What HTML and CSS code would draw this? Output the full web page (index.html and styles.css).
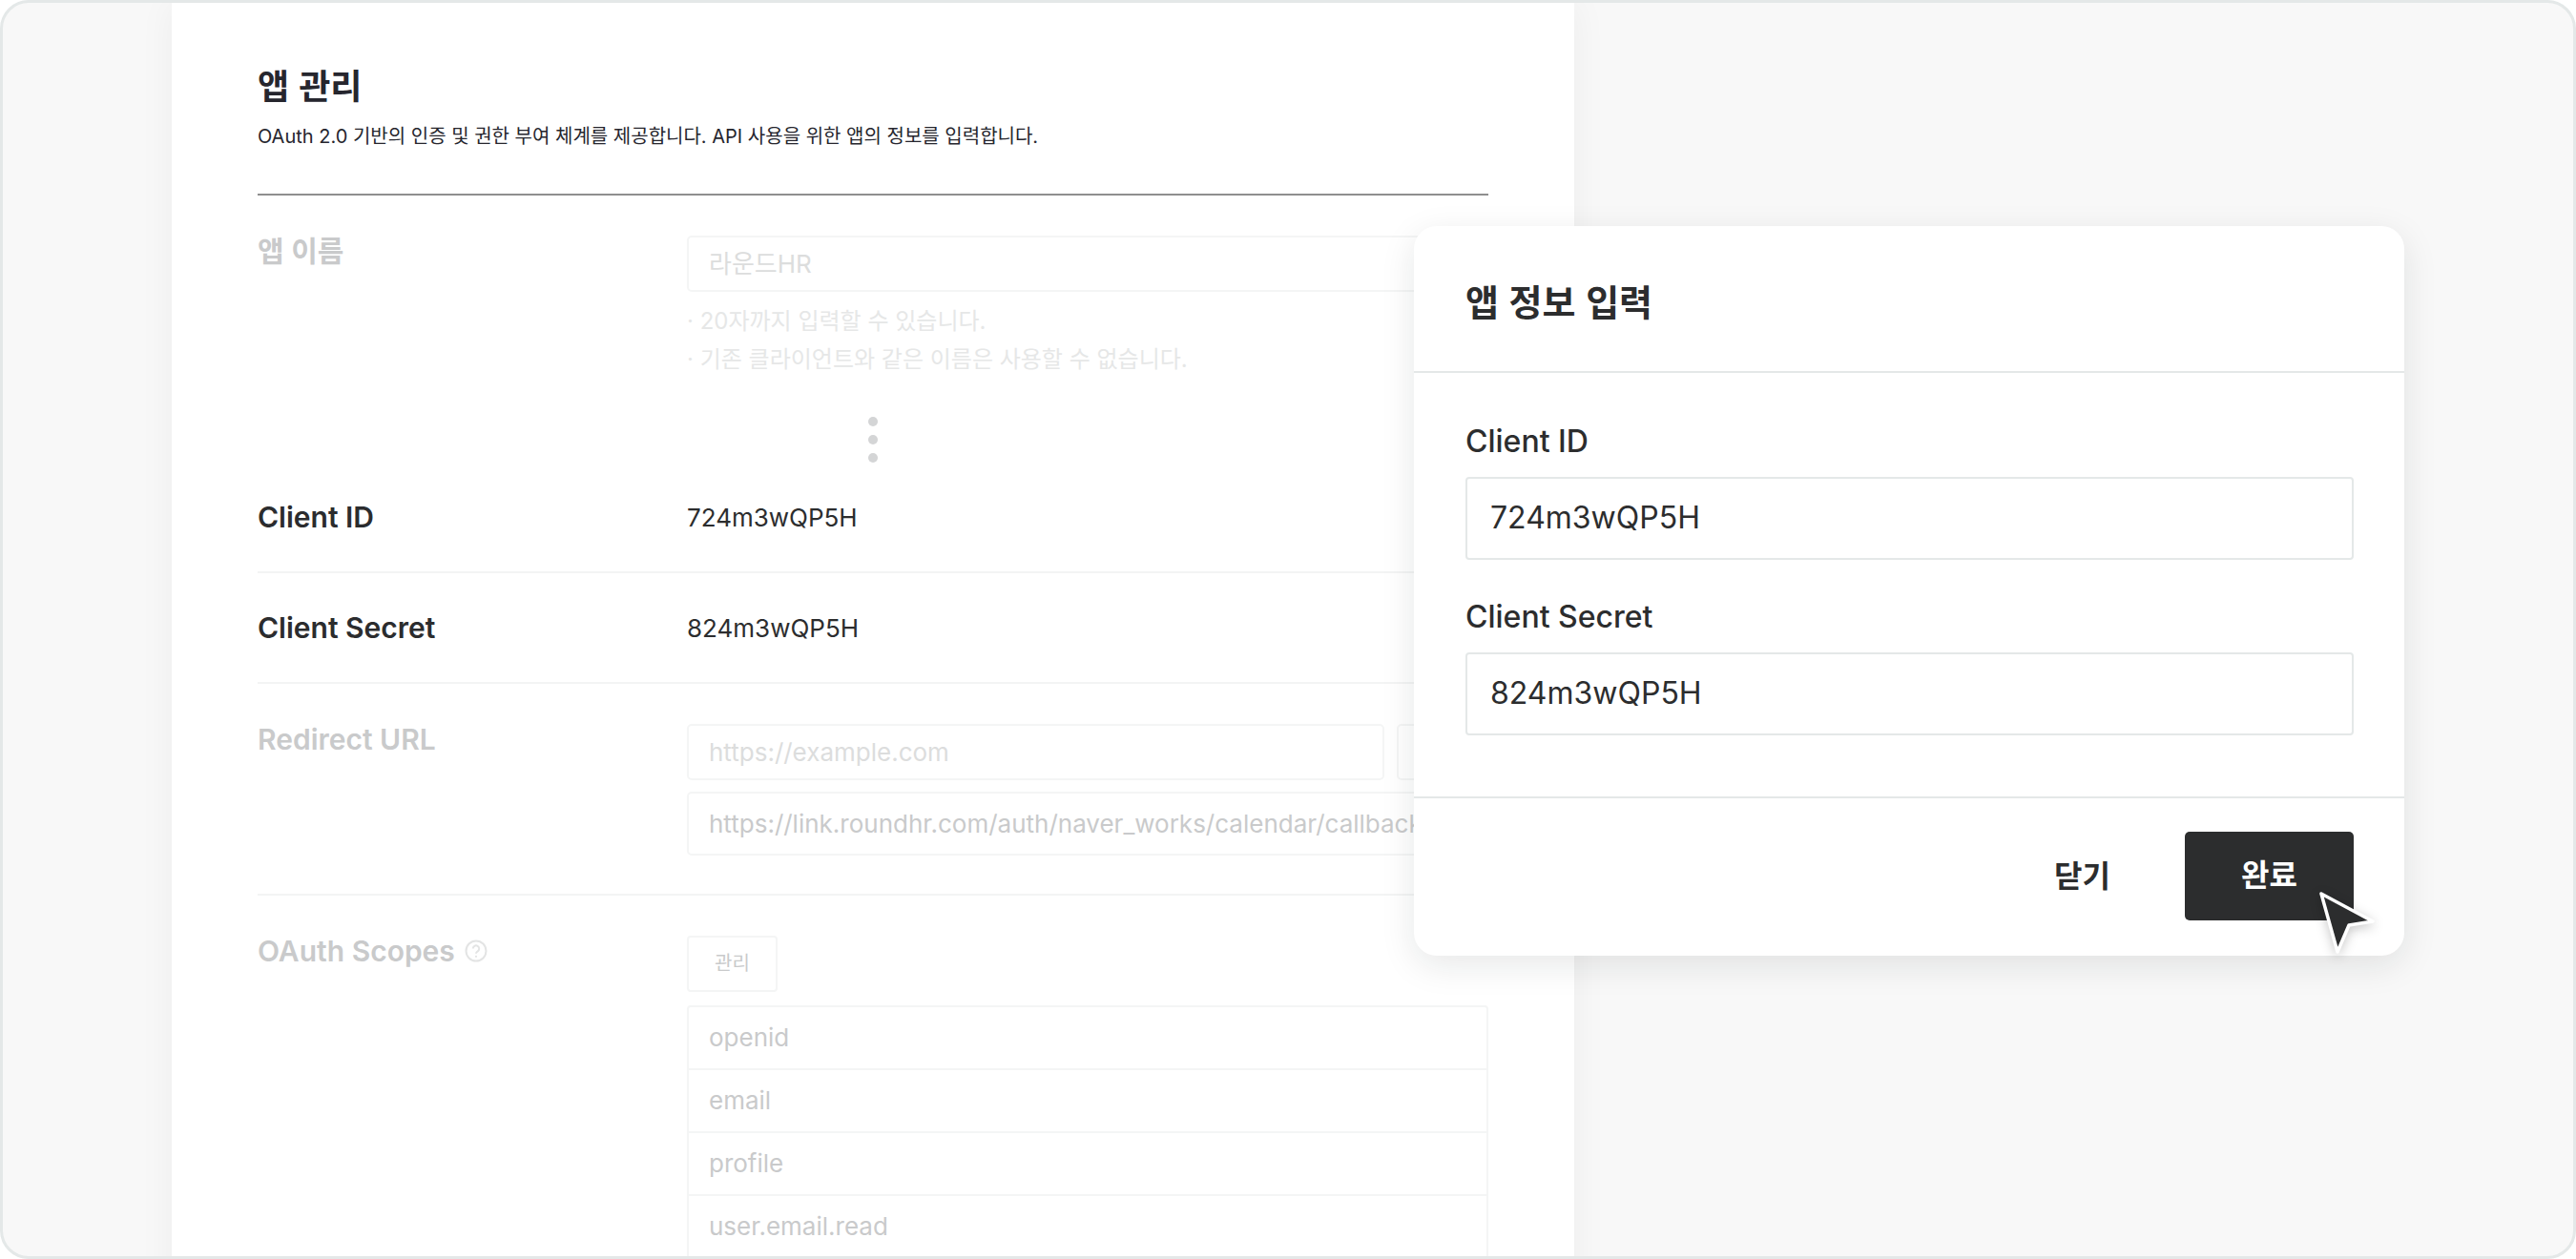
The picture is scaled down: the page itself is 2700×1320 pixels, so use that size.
FILE: index.html
```html
<!DOCTYPE html>
<html lang="ko">
<head>
<meta charset="utf-8">
<title>앱 관리</title>
<link rel="stylesheet" href="styles.css">
</head>
<body>
<div class="frame">
  <main class="card">
    <header class="head">
      <h1 class="title">앱 관리</h1>
      <p class="desc">OAuth 2.0 기반의 인증 및 권한 부여 체계를 제공합니다. API 사용을 위한 앱의 정보를 입력합니다.</p>
    </header>

    <section class="row row-name">
      <div class="label faded">앱 이름</div>
      <div class="field">
        <div class="input placeholder">라운드HR</div>
        <ul class="hints">
          <li>20자까지 입력할 수 있습니다.</li>
          <li>기존 클라이언트와 같은 이름은 사용할 수 없습니다.</li>
        </ul>
      </div>
    </section>

    <div class="dots"><i></i><i></i><i></i></div>

    <section class="row row-info">
      <div class="label">Client ID</div>
      <div class="value">724m3wQP5H</div>
    </section>
    <section class="row row-info">
      <div class="label">Client Secret</div>
      <div class="value">824m3wQP5H</div>
    </section>

    <section class="row row-url">
      <div class="label faded">Redirect URL</div>
      <div class="field">
        <div class="url-add">
          <div class="input placeholder grow">https://example.com</div>
          <div class="input add">추가</div>
        </div>
        <div class="input url-item">https://link.roundhr.com/auth/naver_works/calendar/callback</div>
      </div>
    </section>

    <section class="row row-scope">
      <div class="label faded label-help">OAuth Scopes
        <svg class="help" viewBox="0 0 24 24" aria-hidden="true"><circle cx="12" cy="12" r="10.5"/><path d="M8.8 9.6a3.2 3.2 0 1 1 4.9 2.7c-1 .6-1.7 1.2-1.7 2.5"/><circle class="help-dot" cx="12" cy="17.8" r="1.1"/></svg>
      </div>
      <div class="field">
        <div class="manage">관리</div>
        <ul class="scopes">
          <li>openid</li>
          <li>email</li>
          <li>profile</li>
          <li>user.email.read</li>
        </ul>
      </div>
    </section>
  </main>

  <aside class="modal">
    <h2 class="modal-title">앱 정보 입력</h2>
    <div class="modal-body">
      <label class="m-label">Client ID</label>
      <div class="m-input">724m3wQP5H</div>
      <label class="m-label m-second">Client Secret</label>
      <div class="m-input">824m3wQP5H</div>
    </div>
    <div class="modal-foot">
      <span class="btn-close">닫기</span>
      <span class="btn-done">완료</span>
    </div>
    <svg class="cursor" viewBox="0 0 70 76" aria-hidden="true">
      <path d="M5 4 L59 33 L34 37 L22 65 Z"/>
    </svg>
  </aside>
</div>
</body>
</html>
```
FILE: styles.css
```css
* { box-sizing: border-box; }
html, body { margin: 0; padding: 0; height: 100%; }
body {
  font-family: "Inter", "Noto Sans CJK KR", sans-serif;
  color: #2c2d2e;
  background: #fff;
  overflow: hidden;
}
.frame {
  position: relative;
  width: 2700px;
  height: 1320px;
  border: 3px solid #e4e8e8;
  border-radius: 30px;
  background: #f8f8f8;
  overflow: hidden;
  padding-left: 177px;
}
.card {
  width: 1470px;
  height: 1400px;
  background: #fff;
  padding: 60px 90px 0;
  box-shadow: 0 0 36px rgba(0, 0, 0, .05);
}
.head { height: 142px; border-bottom: 2px solid #8f8f8f; }
.title {
  margin: 0;
  font-size: 36px;
  line-height: 50px;
  font-weight: 700;
  color: #26262e;
  font-family: "Noto Sans CJK KR", sans-serif;
}
.desc {
  margin: 15px 0 0;
  font-size: 20px;
  line-height: 30px;
  color: #26262e;
}
.row { display: grid; grid-template-columns: 450px 1fr; }
.label { font-size: 30px; line-height: 32px; font-weight: 600; color: #2b2c2e; }
.faded { color: #c9cacb; }
.row-name { padding-top: 42px; }
.field { min-width: 0; }
.input {
  height: 59px;
  border: 2px solid #f4f5f5;
  border-radius: 5px;
  padding: 0 21px;
  font-size: 26px;
  line-height: 55px;
  color: #c9cacb;
  white-space: nowrap;
  overflow: hidden;
}
.placeholder { color: #dcdddd; }
.hints {
  list-style: none;
  margin: 11px 0 0;
  padding: 0;
  font-size: 24px;
  line-height: 40px;
  color: #e6e7e7;
}
.hints li::before { content: "· "; }
.dots {
  display: flex;
  flex-direction: column;
  align-items: center;
  gap: 9px;
  margin-top: 40px;
}
.dots i { width: 10px; height: 10px; border-radius: 50%; background: #d4d5d6; }
.row-info { height: 116px; align-items: center; border-bottom: 2px solid #f3f4f4; }
.value { font-size: 26px; color: #2c2d2e; }
.row-url { padding: 42px 0 40px; border-bottom: 2px solid #f3f4f4; }
.url-add { display: flex; gap: 13px; }
.grow { flex: 1; }
.add { width: 96px; color: #dcdddd; }
.url-item { height: 67px; line-height: 63px; margin-top: 12px; overflow: visible; }
.row-scope { padding-top: 42px; }
.label-help { display: flex; align-items: center; gap: 10px; height: 32px; }
.help { width: 24px; height: 24px; fill: none; stroke: #e3e4e4; stroke-width: 2; }
.help-dot { fill: #e3e4e4; stroke: none; }
.manage {
  width: 95px;
  height: 59px;
  border: 2px solid #f4f5f5;
  border-radius: 4px;
  text-align: center;
  font-size: 20px;
  line-height: 55px;
  color: #c9cacb;
}
.scopes {
  list-style: none;
  margin: 14px 0 0;
  padding: 0;
  border: 2px solid #f4f5f5;
  border-radius: 4px;
  font-size: 26px;
  color: #c9cacb;
}
.scopes li { height: 66px; line-height: 64px; padding: 0 21px; border-bottom: 2px solid #f4f5f5; }

.modal {
  position: absolute;
  left: 1479px;
  top: 234px;
  width: 1038px;
  height: 765px;
  background: #fff;
  border-radius: 24px;
  box-shadow: 0 10px 36px rgba(20, 30, 30, .1);
}
.modal-title {
  margin: 0;
  height: 154px;
  padding: 0 54px;
  border-bottom: 2px solid #e4e8e8;
  font-family: "Noto Sans CJK KR", sans-serif;
  font-size: 38px;
  font-weight: 700;
  line-height: 156px;
  color: #2c2d2e;
}
.modal-body { height: 446px; padding: 52px 53px 0 54px; border-bottom: 2px solid #e4e8e8; }
.m-label { display: block; font-size: 32px; line-height: 40px; font-weight: 500; color: #2c2d2e; }
.m-second { margin-top: 40px; }
.m-input {
  height: 87px;
  margin-top: 17px;
  padding: 0 24px;
  border: 2px solid #e4e8e8;
  border-radius: 4px;
  font-size: 32px;
  line-height: 82px;
  color: #2c2d2e;
}
.modal-foot {
  display: flex;
  align-items: center;
  justify-content: flex-end;
  padding: 35px 53px 0 0;
}
.btn-close {
  margin-right: 78px;
  font-size: 32px;
  font-weight: 600;
  line-height: 93px;
  color: #2c2d2e;
}
.btn-done {
  width: 177px;
  height: 93px;
  border-radius: 5px;
  background: #2c2d2e;
  color: #fff;
  text-align: center;
  font-size: 32px;
  font-weight: 600;
  line-height: 91px;
}
.cursor {
  position: absolute;
  left: 946px;
  top: 696px;
  width: 70px;
  height: 76px;
  overflow: visible;
  fill: #2c2d2e;
  stroke: #fff;
  stroke-width: 3.5;
  stroke-linejoin: round;
  filter: drop-shadow(0 3px 6px rgba(0, 0, 0, .22));
}
```
